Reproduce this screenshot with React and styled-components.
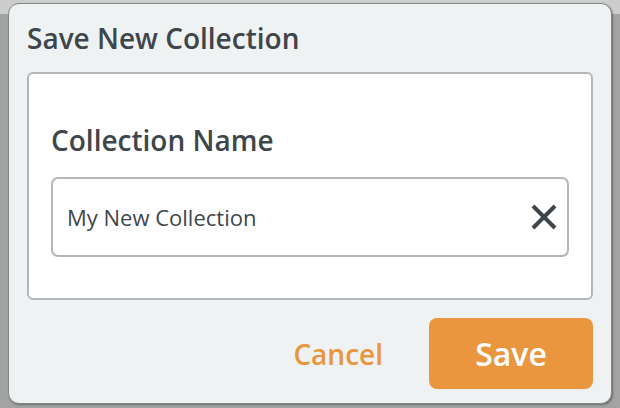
import React, { useState } from "react";
import styled, { createGlobalStyle } from "styled-components";

const GlobalStyle = createGlobalStyle`
  html, body {
    margin: 0;
    padding: 0;
    height: 100%;
  }
  body {
    font-family: "Open Sans", "Liberation Sans", sans-serif;
    background: #a9a9a9;
  }
  #root {
    height: 100%;
  }
`;

const colors = {
  text: "#3f464b",
  orange: "#e9963f",
  panel: "#eff2f3",
  line: "#b3b7b9",
};

const App = () => {
  const [name, setName] = useState("My New Collection");

  return (
    <>
      <GlobalStyle />
      <Backdrop>
        <Modal>
          <Title>Save New Collection</Title>
          <Card>
            <Label htmlFor="collection-name">Collection Name</Label>
            <InputWrap>
              <Input
                id="collection-name"
                value={name}
                onChange={(e) => setName(e.target.value)}
              />
              <ClearButton onClick={() => setName("")} aria-label="Clear">
                <svg width="28" height="28" viewBox="0 0 28 28">
                  <path
                    d="M3 3 L25 25 M25 3 L3 25"
                    stroke={colors.text}
                    strokeWidth="4"
                    strokeLinecap="butt"
                  />
                </svg>
              </ClearButton>
            </InputWrap>
          </Card>
          <Footer>
            <CancelButton>Cancel</CancelButton>
            <SaveButton>Save</SaveButton>
          </Footer>
        </Modal>
      </Backdrop>
    </>
  );
};

const Backdrop = styled.div`
  height: 100%;
  box-sizing: border-box;
  padding: 3px 8px 4px 8px;
  display: flex;
  background: linear-gradient(to bottom, #cdcdcd 0, #cdcdcd 14px, #a3a3a3 14px);
`;

const Modal = styled.div`
  flex: 1;
  display: flex;
  flex-direction: column;
  background: ${colors.panel};
  border: 1px solid #83878a;
  border-radius: 11px;
  box-shadow: 1px 1px 2px rgba(0, 0, 0, 0.35);
  padding: 0 18px 0 18px;
`;

const Title = styled.h2`
  margin: 0;
  padding-top: 15px;
  height: 68px;
  box-sizing: border-box;
  font-size: 28px;
  font-weight: 600;
  line-height: 38px;
  color: ${colors.text};
`;

const Card = styled.div`
  height: 228px;
  box-sizing: border-box;
  background: #fff;
  border: 2px solid ${colors.line};
  border-radius: 6px;
  padding: 47px 22px 0 22px;
`;

const Label = styled.label`
  display: block;
  font-size: 28px;
  font-weight: 600;
  line-height: 38px;
  color: ${colors.text};
  margin-bottom: 18px;
`;

const InputWrap = styled.div`
  height: 80px;
  box-sizing: border-box;
  display: flex;
  align-items: center;
  border: 2px solid ${colors.line};
  border-radius: 7px;
  padding: 0 9px 0 14px;
  background: #fff;
`;

const Input = styled.input`
  flex: 1;
  border: none;
  outline: none;
  background: transparent;
  font-family: "Open Sans", "Liberation Sans", sans-serif;
  font-size: 22px;
  color: ${colors.text};
  padding: 0;
`;

const ClearButton = styled.button`
  border: none;
  background: none;
  padding: 0;
  width: 28px;
  height: 28px;
  display: flex;
  cursor: pointer;
`;

const Footer = styled.div`
  flex: 1;
  display: flex;
  align-items: center;
  justify-content: flex-end;
  gap: 46px;
  padding-top: 4px;
`;

const CancelButton = styled.button`
  border: none;
  background: none;
  padding: 0;
  font-family: "Open Sans", "Liberation Sans", sans-serif;
  font-size: 28px;
  font-weight: 600;
  color: ${colors.orange};
  cursor: pointer;
`;

const SaveButton = styled.button`
  width: 164px;
  height: 71px;
  border: none;
  border-radius: 8px;
  background: ${colors.orange};
  font-family: "Open Sans", "Liberation Sans", sans-serif;
  font-size: 32px;
  font-weight: 600;
  color: #fff;
  cursor: pointer;
`;

export default App;
